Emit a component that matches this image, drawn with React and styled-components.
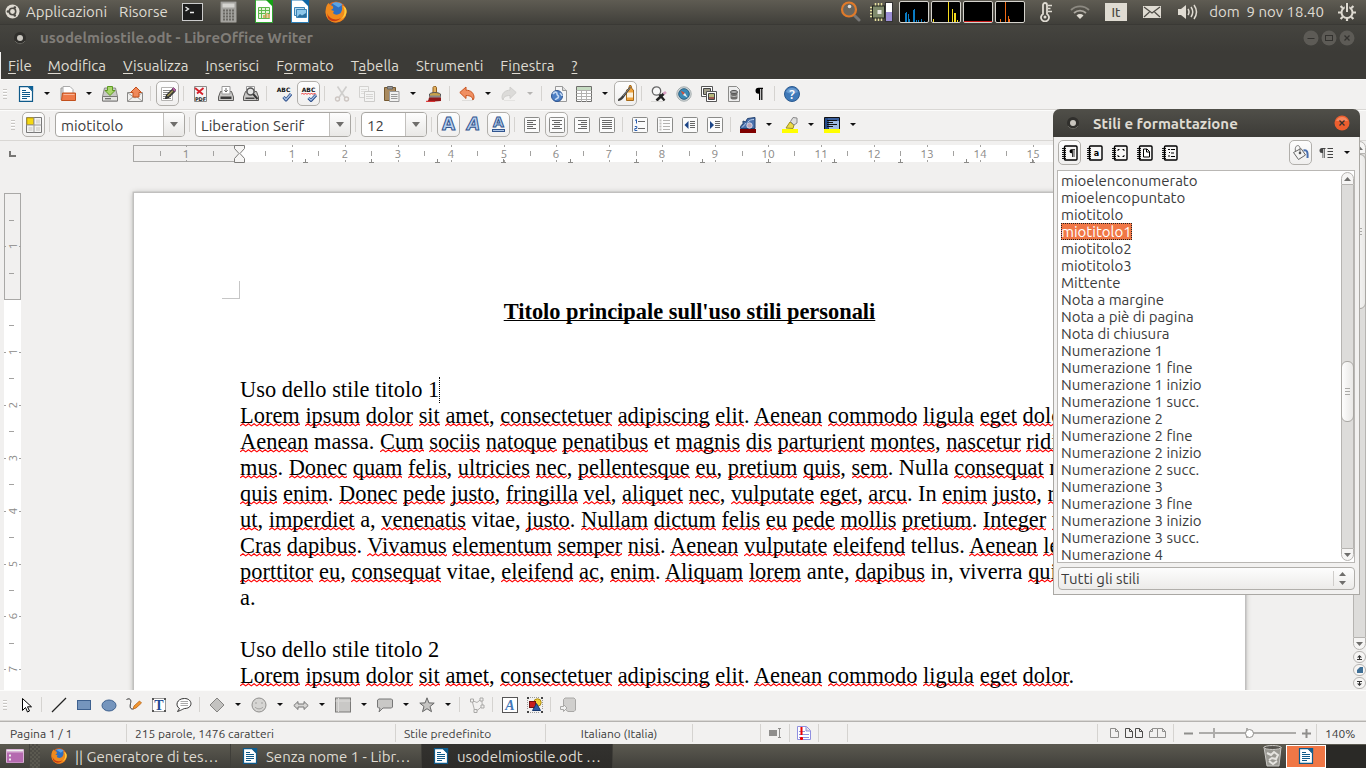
import React from "react";
import styled, { createGlobalStyle, css } from "styled-components";

const ui = `Ubuntu, "Noto Sans", "Open Sans", sans-serif`;
const serif = `"Liberation Serif", "Times New Roman", serif`;

const Global = createGlobalStyle`
  * { box-sizing: border-box; }
  html, body { margin: 0; height: 100%; overflow: hidden; }
  body { font-family: ${ui}; font-size: 15px; color: #3c3c3c; background: #f2f1f0; }
  button, input, select { font-family: inherit; font-size: inherit; color: inherit; }
  button { border: 0; background: none; padding: 0; }
`;

/* ---------- frame ---------- */

const Desktop = styled.div`
  display: flex;
  flex-direction: column;
  height: 100vh;
  position: relative;
  overflow: hidden;
`;

const Panel = styled.header`
  display: flex;
  align-items: center;
  flex: none;
  height: 25px;
  padding: 0 10px 1px 5px;
  color: #dfdbd2;
  background: linear-gradient(#5f5c53, #403f3a);
  border-bottom: 1px solid #3a3935;
`;

const PanelButton = styled.button`
  display: flex;
  align-items: center;
  height: 23px;
  color: #dfdbd2;
  margin-right: ${(p) => p.$after || 0}px;
`;

const Spacer = styled.div`
  flex: 1;
`;

const TitleBar = styled.div`
  display: flex;
  align-items: center;
  flex: none;
  height: 27px;
  padding: 0 11px 1px 12px;
  background: linear-gradient(#45443f, #3c3b37);
`;

const WindowTitle = styled.h1`
  flex: 1;
  margin: 0 0 0 12px;
  font-size: 15px;
  line-height: 20px;
  font-weight: 700;
  color: #807d78;
`;

const WindowButtons = styled.div`
  display: flex;
  gap: 2px;
`;

const MenuBar = styled.nav`
  display: flex;
  align-items: center;
  flex: none;
  height: 27px;
  gap: 1px;
  background: #3c3b37;
  border-left: 1px solid #f2f1f0;
`;

const MenuButton = styled.button`
  height: 26px;
  padding: 0 8px;
  color: #dfdbd2;
  u { text-underline-offset: 2px; }
  &:first-child { padding: 0 7px; }
`;

/* ---------- toolbars ---------- */

const Toolbar = styled.div`
  display: flex;
  align-items: center;
  flex: none;
  height: 31px;
  padding: 0 0 2px ${(p) => p.$indent || 3}px;
  background: #f2f1f0;
  border-top: 1px solid #fcfcfb;
  border-bottom: 1px solid #d9d7d4;
`;

const Grip = styled.span`
  flex: none;
  width: 4px;
  height: 10px;
  margin-right: ${(p) => p.$after || 6}px;
  background: repeating-linear-gradient(#c9c7c4 0 1px, #fff 1px 2px, transparent 2px 3px);
`;

const pressed = css`
  border: 1px solid #b1afab;
  border-radius: 5px;
  background: linear-gradient(#fdfdfd, #f0efee);
`;

const Tool = styled.button`
  display: flex;
  align-items: center;
  justify-content: center;
  flex: none;
  width: 23px;
  height: 25px;
  margin: 0 1px;
  ${(p) => p.$on && pressed}
  svg { flex: none; }
`;

const DropArrow = styled.button`
  display: flex;
  align-items: center;
  justify-content: center;
  flex: none;
  width: 17px;
  height: 25px;
  color: ${(p) => (p.$dim ? "#b5b4b2" : "#111")};
  &::after {
    content: "";
    border: 3px solid transparent;
    border-top-color: currentColor;
    border-bottom: 0;
  }
`;

const Separator = styled.span`
  flex: none;
  width: 1px;
  height: 15px;
  margin: 0 4px 0 3px;
  background: #d5d3d0;
`;

const Combo = styled.div`
  display: flex;
  flex: none;
  width: ${(p) => p.$width}px;
  height: 25px;
  margin: 0 1px;
  border: 1px solid #a9a7a3;
  border-radius: 4px;
  background: #fff;
  overflow: hidden;
`;

const ComboInput = styled.input`
  flex: 1;
  min-width: 0;
  border: 0;
  outline: 0;
  padding: 2px 5px 0;
  background: transparent;
`;

const ComboButton = styled.button`
  display: flex;
  align-items: center;
  justify-content: center;
  width: 21px;
  border-left: 1px solid #c2c0bd;
  background: linear-gradient(#fdfdfd, #e9e8e6);
  &::after {
    content: "";
    border: 4px solid transparent;
    border-top: 5px solid #6f6e6c;
    border-bottom: 0;
  }
`;

/* ---------- document area ---------- */

const Main = styled.main`
  display: flex;
  flex: 1;
  min-height: 0;
  background: #f1f0ef;
`;

const Editor = styled.div`
  display: flex;
  flex-direction: column;
  flex: 1;
  min-width: 0;
`;

const RulerRow = styled.div`
  display: flex;
  flex: none;
  height: 23px;
  padding-top: 3px;
`;

const RulerCorner = styled.div`
  flex: none;
  width: 25px;
  padding: 7px 0 0 9px;
  line-height: 0;
`;

const RulerTrack = styled.div`
  display: flex;
  justify-content: center;
  flex: 1;
  min-width: 0;
  svg { flex: none; }
`;

const Work = styled.div`
  display: flex;
  flex: 1;
  min-height: 0;
`;

const SideRuler = styled.div`
  flex: none;
  width: 25px;
  padding: 29px 0 0 4px;
  overflow: hidden;
`;

const Canvas = styled.div`
  display: flex;
  justify-content: center;
  flex: 1;
  min-width: 0;
  overflow: hidden;
  padding: 29px 0 0 1px;
`;

/* The sheet keeps its A4 size in document units; the view shows it at 140%. */
const Sheet = styled.article`
  zoom: 1.4;
  flex: none;
  width: 794px;
  height: 1123px;
  padding: 63px 76px 0;
  background: #fff;
  box-shadow: 0 0 0 1px #c1c0bf, 0 1px 4px 1px #a9a8a6;
  font-family: ${serif};
  font-size: 16px;
  color: #000;
`;

const CornerMark = styled.div`
  width: 13px;
  height: 13px;
  margin-left: -13px;
  border-right: 1px solid #c6c6c6;
  border-bottom: 1px solid #c6c6c6;
`;

const DocTitle = styled.h2`
  margin: 0;
  font-size: 16px;
  font-weight: 700;
  text-align: center;
  text-decoration: underline;
  text-decoration-thickness: 1px;
  text-underline-offset: 1px;
  text-decoration-skip-ink: none;
`;

const Para = styled.p`
  margin: 0;
`;

const wave = "M0 2.2" + "l2 -1.6l2 1.6".repeat(10);
const waveImage = encodeURIComponent(
  `<svg xmlns="http://www.w3.org/2000/svg" width="40" height="3" viewBox="0 0 40 3"><path d="${wave}" fill="none" stroke="#f00" stroke-width=".8"/></svg>`
);

const Misspelt = styled.span`
  background: url("data:image/svg+xml,${waveImage}") repeat-x 0 calc(100% - 1px) / 40px 3px;
`;

const Caret = styled.span`
  display: inline-block;
  height: 18px;
  vertical-align: top;
  border-left: 1px dotted #000;
`;

/* ---------- scrollbars ---------- */

const Scroll = styled.div`
  display: flex;
  flex-direction: column;
  align-items: stretch;
  flex: none;
  width: 13px;
  padding-bottom: ${(p) => p.$after || 0}px;
`;

const ScrollButton = styled.button`
  display: flex;
  align-items: center;
  justify-content: center;
  flex: none;
  height: ${(p) => (p.$round ? 12 : 13)}px;
  margin-top: ${(p) => (p.$round ? 1 : 0)}px;
  border: 1px solid #b6b4b1;
  border-radius: ${(p) => (p.$round ? "6px" : p.$down ? "0 0 7px 7px" : "7px 7px 0 0")};
  background: #f6f5f4;
`;

const ScrollTrough = styled.div`
  display: flex;
  flex-direction: column;
  flex: 1;
  min-height: 0;
  background: #dddcda;
  border: solid #b6b4b1;
  border-width: 0 1px;
`;

const ScrollGap = styled.div`
  flex: ${(p) => p.$grow};
`;

const ScrollThumb = styled.div`
  display: flex;
  align-items: center;
  justify-content: center;
  flex: ${(p) => p.$grow};
  margin: 0 -1px;
  border: 1px solid #a9a7a3;
  border-radius: 6px;
  background: linear-gradient(90deg, #fdfdfd, #e9e8e6);
  &::after {
    content: "";
    width: 5px;
    height: 7px;
    background: repeating-linear-gradient(#aaa9a6 0 1px, transparent 1px 3px);
  }
`;

/* ---------- styles window ---------- */

const StylesWindow = styled.aside`
  position: absolute;
  top: 109px;
  right: 6px;
  width: 307px;
  display: flex;
  flex-direction: column;
  border: 1px solid #aaa8a4;
  border-top: 0;
  border-radius: 7px 7px 0 0;
  background: #f2f1f0;
`;

const StylesTitle = styled.div`
  display: flex;
  align-items: center;
  height: 28px;
  margin: 0 -1px;
  padding: 0 10px 0 12px;
  border-radius: 7px 7px 0 0;
  background: linear-gradient(#504f49, #3c3b37);
  h2 {
    flex: 1;
    margin: 0 0 0 12px;
    font-size: 15px;
    color: #dfdbd2;
  }
`;

const CloseButton = styled.button`
  display: flex;
  width: 16px;
  height: 16px;
`;

const StylesTools = styled.div`
  display: flex;
  align-items: center;
  height: 33px;
  padding: 0 4px 2px 3px;
`;

const ListFrame = styled.div`
  display: flex;
  height: 393px;
  margin: 0 4px 0 3px;
  padding: 1px 0;
  border: 1px solid #b9b7b4;
  background: #fff;
`;

const StyleList = styled.ul`
  flex: 1;
  margin: 0;
  padding: 0 0 0 3px;
  list-style: none;
  overflow: hidden;
`;

const StyleItem = styled.li`
  height: 17px;
  line-height: 17px;
  white-space: nowrap;
  span {
    display: inline-block;
    height: 17px;
    ${(p) =>
      p.$selected &&
      css`
        color: #fff;
        background: #f07746;
        outline: 1px dotted #222;
        outline-offset: -1px;
      `}
  }
`;

const FilterField = styled.label`
  display: block;
  position: relative;
  margin: 4px 4px 4px;
`;

const FilterSelect = styled.select`
  display: block;
  width: 100%;
  height: 23px;
  padding: 0 2px;
  appearance: none;
  border: 1px solid #b1afab;
  border-radius: 4px;
  background: linear-gradient(#fdfdfd, #ecebe9);
`;

const FilterArrows = styled.span`
  position: absolute;
  right: 9px;
  top: 4px;
  padding-left: 5px;
  height: 15px;
  border-left: 1px solid #cfcdca;
  pointer-events: none;
`;

/* ---------- status bar and task bar ---------- */

const StatusBar = styled.footer`
  display: flex;
  flex: none;
  align-items: center;
  height: 23px;
  font-size: 12px;
  border-top: 1px solid #b5b3b0;
  background: #f2f1f0;
`;

const StatusCell = styled.div`
  display: flex;
  align-items: center;
  justify-content: ${(p) => (p.$center ? "center" : "flex-start")};
  flex: none;
  width: ${(p) => p.$width}px;
  height: 18px;
  padding-left: ${(p) => (p.$center ? 0 : p.$indent || 8)}px;
  gap: ${(p) => p.$gap || 4}px;
  border-right: 1px solid #d5d3d0;
  &:last-child { border: 0; }
`;

const StatusFill = styled.div`
  flex: 1;
  height: 18px;
  border-right: 1px solid #d5d3d0;
`;

const ZoomRange = styled.input`
  appearance: none;
  width: 97px;
  height: 12px;
  margin: 0;
  background:
    linear-gradient(#adacaa, #adacaa) 14px 1px / 2px 10px no-repeat,
    linear-gradient(#adacaa, #adacaa) 47px 1px / 2px 10px no-repeat,
    linear-gradient(#adacaa, #adacaa) 0 5px / 100% 2px no-repeat;
  &::-webkit-slider-thumb {
    appearance: none;
    width: 9px;
    height: 9px;
    border: 1px solid #8f8e8b;
    border-radius: 50%;
    background: #fff;
  }
`;

const TaskBar = styled.footer`
  display: flex;
  align-items: center;
  flex: none;
  height: 24px;
  padding-left: 6px;
  color: #dfdbd2;
  background: linear-gradient(#5b5950, #403f3a);
`;

const TaskGrip = styled.span`
  width: 11px;
  height: 24px;
  margin-left: 5px;
  border-left: 1px solid #45443f;
  background: repeating-conic-gradient(#4d4b45 0 25%, #5b5950 0 50%) 0 0 / 4px 4px;
`;

const Task = styled.button`
  display: flex;
  align-items: center;
  gap: 8px;
  width: 191px;
  height: 24px;
  padding-left: 11px;
  color: #dfdbd2;
  white-space: nowrap;
  border-right: 1px solid #3f3e39;
  background: ${(p) => (p.$active ? "linear-gradient(#33322f, #2d2c29)" : "transparent")};
  svg { flex: none; }
`;

const Workspace = styled.button`
  display: flex;
  align-items: center;
  justify-content: center;
  width: 40px;
  height: 23px;
  background: ${(p) => (p.$current ? "#f07746" : "#2a2926")};
  border: ${(p) => (p.$current ? "1px solid #fff" : "0")};
`;

/* ---------- drawings ---------- */

const Svg = ({ w = 16, h = w, box, children }) => (
  <svg width={w} height={h} viewBox={box || `0 0 ${w} ${h}`} aria-hidden="true">
    {children}
  </svg>
);

const lines = (x1, x2, ys, color = "#666") => (
  <path d={ys.map((y) => `M${x1} ${y}H${x2}`).join("")} stroke={color} fill="none" />
);

const Boxed = ({ children }) => (
  <Svg>
    <rect x="0.5" y="0.5" width="15" height="15" rx="1" fill="#fbfbfb" stroke="#8b8b89" />
    {children}
  </Svg>
);

const StyleBook = ({ children }) => (
  <Svg>
    <rect x="2.500" y="1" width="12.500" height="14" rx="1" fill="#f8f7f6" stroke="#000" strokeWidth="1.400" />
    <path d="M0 3.500h4M0 5.500h4M0 7.500h4M0 9.500h4M0 11.500h4M0 13.500h4" stroke="#000" strokeWidth=".900" />
    {children}
  </Svg>
);

const WriterDoc = ({ s = 16 }) => (
  <Svg w={s} box="0 0 16 16">
    <path d="M1.500 .700h8.500l4.500 4.500V15.300H1.500z" fill="#fff" stroke="#0f5a8a" strokeWidth="1.200" />
    <path d="M10 0h5.200v5.500z" fill="#0b5f95" />
    <path d="M4 4.500h4M4 6.500h8M4 8.500h8M4 10.500h8M4 12.500h5" stroke="#0f5a8a" />
  </Svg>
);

const Firefox = ({ s = 16 }) => (
  <Svg w={s} box="0 0 22 22">
    <circle cx="11" cy="11" r="10.500" fill="#e5641a" />
    <circle cx="11.500" cy="9" r="7.500" fill="#2f6fc0" />
    <path d="M7 2.500c3-2 8-1.500 10.500 1l-4 3z" fill="#5ba4e6" />
    <path d="M1 7C1.500 4 3 2.500 4 2c0 1.500 1 2 2.500 2.500C8 5 8.500 6 8 7.500L6 9l3 1-1 2c2 2.500 6 2 8-.5 1.500-2.500 1.500-5 .5-7.500C21 6 22 10 21 14c-2 6-9 9-14.500 6.500C1 18 0 12 1 7z" fill="#f08a1d" />
    <path d="M18 5c2.500 4 2 10-2 13 3.500-1 6-5 5.500-9C21 7 19.500 5.500 18 5z" fill="#fccf3d" />
    <path d="M2 12c2 6 9 8 14 5-3 4-10 4.500-13 0z" fill="#c83d12" />
  </Svg>
);

const Dot = () => (
  <Svg w={16}>
    <circle cx="8" cy="8" r="6" fill="#302f2c" />
    <path d="M3 11a6 6 0 0 0 10 0" stroke="#66655f" fill="none" />
    <circle cx="8" cy="8" r="3" fill="#c9c6bf" />
  </Svg>
);

const Graph = ({ bars, color, floor }) => (
  <Svg w={30} h={22}>
    <rect x="0.500" y="0.500" width="29" height="21" rx="1.500" fill="#000" stroke="#d5d3cd" />
    {bars.map(([x, hh]) => (
      <rect key={x} x={x} y={21 - hh} width="1" height={hh} fill={color} />
    ))}
    {floor && <path d="M1 20.500h28" stroke={color} />}
  </Svg>
);

const Letter = ({ italic, underline }) => (
  <Svg w={19} h={21}>
    <text x={9.5} y={underline ? 13 : 16} textAnchor="middle" fontFamily="DejaVu Sans" fontWeight="700" fontStyle={italic ? "italic" : "normal"}
      fontSize={underline ? 14 : 17} fill="#b7d0ee" stroke="#31558f" strokeWidth="1">A</text>
    {underline && <rect x="3.500" y="15.500" width="12" height="2" fill="#a9c3e4" stroke="#31558f" />}
  </Svg>
);

const grey = "#8f8e8c";

const icons = {
  newDoc: <WriterDoc />,
  open: (
    <Svg>
      <path d="M1 14V2h5l1 2h5v4" fill="#ddd" stroke="#9b9a98" />
      <path d="M3 0.500h7l3 3V8H3z" fill="#fff" stroke="#aaa" />
      <path d="M1.500 14.500l1-7.500h13v7.500z" fill="#ee7a49" stroke="#c2501d" />
      <path d="M3.500 8.500h11" stroke="#f9b698" />
    </Svg>
  ),
  save: (
    <Svg>
      <path d="M2.500 2h11l2 8.500v4.500H.5v-4.500z" fill="#c9c8c6" stroke="#8b8a88" />
      <path d="M.5 10.500h15v4.500H.5z" fill="#e4e3e1" stroke="#7b7a78" />
      <path d="M3 12.700h6" stroke="#666" strokeWidth="1.200" />
      <path d="M5.500 0.500h5V4.500H13L8 9.500 3 4.500h2.500z" fill="#a9d66a" stroke="#5c9a22" />
    </Svg>
  ),
  mail: (
    <Svg>
      <path d="M.5 6.500h15v9H.5z" fill="#f1f0ee" stroke="#8b8a88" />
      <path d="M1 15L6.500 10.500M15 15L9.500 10.500M1 7l7 5 7-5" stroke="#a5a4a2" fill="none" />
      <path d="M6 11V6.500H3.500L9 1l5.500 5.500H12V11z" fill="#f0895a" stroke="#c2501d" />
    </Svg>
  ),
  edit: (
    <Svg>
      <path d="M1.500 1.500h11v13h-11z" fill="#fff" stroke="#b5b4b2" />
      {lines(3, 11, [4.5, 6.5, 8.5, 10.5, 12.5], "#8a8a88")}
      <path d="M5.500 12.500l1-3.500 6-6 2.500 2.500-6 6z" fill="#4a4a44" stroke="#222" />
      <path d="M7.500 10L13 4.500" stroke="#e5cf55" />
      <path d="M12 3l1.500-1.500L16 4l-1.500 1.500z" fill="#b05a9e" stroke="#5c2a52" strokeWidth=".600" />
    </Svg>
  ),
  pdf: (
    <Svg>
      <path d="M1.500 .500h12v15h-12z" fill="#f6f6f6" stroke="#8b8b89" />
      <path d="M2 2l8 6.500M10.500 2L4 7.500" stroke="#d5202a" strokeWidth="1.800" />
      <text x="7.500" y="14.500" textAnchor="middle" fontFamily="DejaVu Sans" fontWeight="700" fontSize="5" fill="#222">PDF</text>
    </Svg>
  ),
  print: (
    <Svg>
      <path d="M2.500 5.500h11l2 5.500v3.500H.5V11z" fill="#c9c8c6" stroke="#5c5b59" />
      <path d="M4 .500h8V8H4z" fill="#fff" stroke="#999" />
      <path d="M8 2v4M6.300 4.300L8 6l1.700-1.700" stroke="#666" fill="none" />
      <path d="M2.500 10.500h11v2.500h-11z" fill="#3a3a3a" />
    </Svg>
  ),
  preview: (
    <Svg>
      <path d="M2.500 5.500h11l2 5.500v3.500H.5V11z" fill="#c9c8c6" stroke="#5c5b59" />
      <path d="M2.500 11.500h9v1.500h-9z" fill="#444" />
      <path d="M3.500.500h8V7h-8z" fill="#fff" stroke="#999" />
      <circle cx="7.500" cy="5.500" r="3.500" fill="#e4e4e3" stroke="#555" strokeWidth="1.400" />
      <path d="M10.200 8.200L14.500 13" stroke="#333" strokeWidth="2" />
    </Svg>
  ),
  spell: (
    <Svg>
      <text x="7.500" y="6" textAnchor="middle" fontFamily="DejaVu Sans" fontWeight="700" fontSize="6" fill="#111">ABC</text>
      <path d="M7.500 11l2.500 3 5-6" stroke="#274a86" strokeWidth="3" fill="none" strokeLinejoin="round" />
      <path d="M7.700 11.200L10 13.700l4.700-5.500" stroke="#a9c3e8" strokeWidth="1.400" fill="none" />
    </Svg>
  ),
  autoSpell: (
    <Svg>
      <text x="7.500" y="6" textAnchor="middle" fontFamily="DejaVu Sans" fontWeight="700" fontSize="6" fill="#111">ABC</text>
      <path d="M0 8.500l1.500-1.500 1.500 1.500L4.500 7 6 8.500 7.500 7 9 8.500 10.500 7 12 8.500 13.500 7 15 8.500" stroke="#e22" fill="none" strokeWidth=".900" />
      <path d="M7.500 12l2.500 2.500 5-5.500" stroke="#274a86" strokeWidth="3" fill="none" strokeLinejoin="round" />
      <path d="M7.700 12L10 14.200l4.700-5" stroke="#a9c3e8" strokeWidth="1.300" fill="none" />
    </Svg>
  ),
  cut: (
    <Svg>
      <path d="M3.500.500l7.500 11M12.500.500L5 11.500" stroke="#cfcecc" strokeWidth="1.600" />
      <circle cx="3.500" cy="13" r="2" fill="none" stroke="#cdc6c2" strokeWidth="1.400" />
      <circle cx="12.500" cy="13" r="2" fill="none" stroke="#cdc6c2" strokeWidth="1.400" />
    </Svg>
  ),
  copy: (
    <Svg>
      <path d="M.5 .500h9v11h-9z" fill="#f4f4f3" stroke="#d3d2d0" />
      {lines(2, 8, [3.5, 5.5, 7.5], "#dfdedc")}
      <path d="M5.500 5.500h10v10h-10z" fill="#f4f4f3" stroke="#cdccca" />
      {lines(7, 14, [8.5, 10.5, 12.5], "#d6d5d3")}
    </Svg>
  ),
  paste: (
    <Svg>
      <path d="M.5 1.500h11v13H.5z" fill="#a98a5f" stroke="#75582f" />
      <path d="M3.500.500h5v2.500h-5z" fill="#999" stroke="#666" />
      <path d="M5.500 5.500h9.500v10H5.500z" fill="#f1f1f0" stroke="#999" />
      {lines(7, 13.5, [8.5, 10.5, 12.5], "#999")}
    </Svg>
  ),
  brush: (
    <Svg>
      <path d="M7 1.500c0-1.500 3.500-1.500 3.500 0v5.500H7z" fill="#e2b060" stroke="#8f5d1a" />
      <path d="M3.500 8c2-2 8.500-2 11 0v3h-11z" fill="#c9a24a" stroke="#555" />
      <path d="M3.500 9.500h11l.5 2h-12z" fill="#888" />
      <path d="M3 11.500h12v3.500c-4 .500-9 .500-14 .5 1.500-1 1.500-2 2-4z" fill="#8f1a1a" />
      <path d="M0 15.300h9" stroke="#d22" />
    </Svg>
  ),
  undo: (
    <Svg>
      <path d="M.800 6.500L7 1v3.200c5 0 8 3 8 7.300 0 1-.5 2-1.200 2.500 0-3-2.300-4.500-6.800-4.500v3z" fill="#f08f62" stroke="#c9541f" />
      <path d="M3 14.500h11" stroke="#dedddb" />
    </Svg>
  ),
  redo: (
    <Svg>
      <path d="M15.200 6.500L9 1v3.200c-5 0-8 3-8 7.300 0 1 .5 2 1.200 2.500 0-3 2.300-4.500 6.800-4.500v3z" fill="#dcdbd9" stroke="#cfcecc" />
      <path d="M3 14.500h11" stroke="#e4e3e1" />
    </Svg>
  ),
  link: (
    <Svg>
      <path d="M4.500.500h7l4 4v11h-11z" fill="#f6f6f6" stroke="#999" />
      <path d="M11.500.500v4h4" fill="#ddd" stroke="#999" />
      <circle cx="6" cy="10" r="5.500" fill="#4d7fc4" stroke="#2f5590" />
      <path d="M2 8c2-3 4-2 4 0s2 1 1.500 3-3 1-3 3M9 7c1 1 2 2 2 3" stroke="#c3d8f2" fill="none" strokeWidth="1.600" />
    </Svg>
  ),
  table: (
    <Svg>
      <path d="M.5.500h15v15H.5z" fill="#fff" stroke="#6f6e6c" />
      <path d="M1 1h14v3H1z" fill="#c6dcc2" />
      <path d="M.5 4.500h15M.5 7.500h15M.5 10.500h15M.5 13.500h15M5.500 4v12M10.500 4v12" stroke="#b3b2b0" />
    </Svg>
  ),
  draw: (
    <Svg w={17} h={17}>
      <path d="M9.500 5l2-1 1-3.500h1.500L15 4l1.500 1v10.500h-7z" fill="#f0a23b" stroke="#a56a1a" />
      <path d="M10 7.500h6v5h-6z" fill="#fbf1dc" />
      <path d="M1 16c0-3 2-2.500 3-4L13 1.500l1 1L6.500 13C5 15 3 16 1 16z" fill="#3d3d3c" />
      <path d="M6 11L13.500 2" stroke="#9a9a98" strokeWidth=".800" />
    </Svg>
  ),
  find: (
    <Svg>
      <circle cx="5.500" cy="5" r="4.200" fill="#f8f8f8" stroke="#666" strokeWidth="1.300" />
      <path d="M8.500 8.500l5 6" stroke="#222" strokeWidth="2.200" />
      <path d="M5.500 14.500L13 7.500" stroke="#222" strokeWidth="2.600" />
      <path d="M12.500 8l2.500-2" stroke="#d9a0c2" strokeWidth="2.800" />
      <path d="M0 15.500h12" stroke="#d9d8d6" />
    </Svg>
  ),
  compass: (
    <Svg>
      <circle cx="8" cy="8" r="7.200" fill="#d5dadb" stroke="#a3abad" />
      <circle cx="8" cy="8" r="5.300" fill="#3a8ab6" stroke="#2b5f7f" />
      <path d="M4.500 4.500L9 7 7 9z" fill="#d2503a" />
      <path d="M11.500 11.500L7 9l2-2z" fill="#e8edf0" />
    </Svg>
  ),
  gallery: (
    <Svg>
      <path d="M.5.500h11v10H.5z" fill="#fff" stroke="#555" />
      <path d="M2.500 2.500h7v6h-7z" fill="#a3a08a" stroke="#444" />
      <path d="M5.500 5.500h10v10h-10z" fill="#fff" stroke="#555" />
      <path d="M7.500 7.500h6v6h-6z" fill="#b5b87a" stroke="#444" />
      <path d="M8 11h5v2H8z" fill="#a05a50" />
    </Svg>
  ),
  database: (
    <Svg>
      <path d="M2.500.500h8l3 3v12h-11z" fill="#eee" stroke="#8b8b89" />
      <path d="M4.500 6v6c0 2 7 2 7 0V6z" fill="#6f6e6c" />
      <ellipse cx="8" cy="6" rx="3.500" ry="1.600" fill="#aaa" stroke="#555" />
      <path d="M4.500 9c0 2 7 2 7 0" stroke="#bbb" fill="none" />
    </Svg>
  ),
  pilcrow: (
    <Svg>
      <path d="M12 1.700H7.500a3 3 0 0 0 0 6H8V14h1.200V2.900h1V14h1.200V2.900H12z" fill="#000" />
    </Svg>
  ),
  help: (
    <Svg>
      <circle cx="8" cy="8" r="7.500" fill="#3f79b8" stroke="#2b5a90" />
      <path d="M2 6a6.500 6.500 0 0 1 12 0c-4 2-8 2-12 0z" fill="#6a9bd0" />
      <text x="8" y="12.500" textAnchor="middle" fontFamily="Noto Sans" fontWeight="600" fontSize="12" fill="#fff">?</text>
    </Svg>
  ),
  styles: (
    <Svg>
      <path d="M.5.500h15v15H.5z" fill="#f3f3f2" stroke="#777" />
      <path d="M1 1h6.500v6.500H1z" fill="#f3d913" stroke="#c9a50a" />
      <path d="M8 .500v15M.5 8h15" stroke="#999" />
      <path d="M10 2.500h4v4h-4zM2.500 10h4v4h-4zM10 10h4v4h-4z" fill="#dcdbd9" />
    </Svg>
  ),
  left: <Boxed>{lines(3, 12, [3.5, 7.5, 11.5])}{lines(3, 9, [5.5, 9.5])}</Boxed>,
  center: <Boxed>{lines(3, 13, [3.5, 7.5, 11.5])}{lines(5, 11, [5.5, 9.5])}</Boxed>,
  right: <Boxed>{lines(4, 13, [3.5, 7.5, 11.5])}{lines(7, 13, [5.5, 9.5])}</Boxed>,
  justify: <Boxed>{lines(3, 13, [3.5, 5.5, 7.5, 9.5, 11.5])}</Boxed>,
  numbered: (
    <Boxed>
      {lines(6, 13, [4.5, 11.5])}
      <path d="M3 3.500l1.500-1V6.500M2.800 9.500h2v2h-2v2h2.500" stroke="#2c5fae" fill="none" />
    </Boxed>
  ),
  bullets: (
    <Boxed>
      {lines(6, 13, [3.5, 6.5, 9.5, 12.5], "#b3b2b0")}
      <path d="M2.500 2.500h2v2h-2zM2.500 5.500h2v2h-2zM2.500 8.500h2v2h-2zM2.500 11.500h2v2h-2z" fill="#c3c2c0" />
    </Boxed>
  ),
  outdent: (
    <Boxed>
      <path d="M6.500 4v8L2.500 8z" fill="#1c4587" />
      {lines(8, 13, [4.5, 6.5, 8.5, 10.5])}
    </Boxed>
  ),
  indent: (
    <Boxed>
      <path d="M3 4v8l4-4z" fill="#1c4587" />
      {lines(8, 13, [4.5, 6.5, 8.5, 10.5])}
    </Boxed>
  ),
  fontColor: (
    <Svg>
      <path d="M.5 11.500c0-3 1-4 2.500-4l0-3.500 2.500 1L7.500 1.500l7.500-1v11z" fill="#4a70ac" stroke="#24426f" />
      <path d="M2 10.500c1-2 3-2 4-4.500M7.500 5.500c2-2.500 4-3 6.500-3" stroke="#b7cce8" fill="none" />
      <circle cx="9.500" cy="8.500" r="2.700" fill="#b9a3b8" stroke="#dbe6f5" strokeWidth=".800" />
      <path d="M0 12h16v4H0z" fill="#800000" />
    </Svg>
  ),
  highlight: (
    <Svg>
      <path d="M4 11l4-6 4 3-1 3.500z" fill="#ead94a" stroke="#9f8f1a" />
      <path d="M8.500 4.500L11 .500l4 .5v5L12 8z" fill="#ddd" stroke="#888" />
      <path d="M0 12h16v4H0z" fill="#ff0" />
    </Svg>
  ),
  background: (
    <Svg>
      <path d="M.5.500h15V12H.5z" fill="#3a5f9c" stroke="#111" />
      <path d="M5 4h10v8H5z" fill="#9dbbe2" />
      <path d="M1 1h3v11H1z" fill="#254a88" />
      {lines(3, 13, [3.5, 7.5], "#111")}
      {lines(3, 9, [5.5, 9.5], "#111")}
      <path d="M0 12h16v4H0z" fill="#ff0" />
    </Svg>
  ),
  select: (
    <Svg>
      <path d="M4.500 1.500v12l3-3 2 4.500 2-1-2-4.200h4z" fill="#fff" stroke="#000" />
    </Svg>
  ),
  line: <Svg><path d="M1 15L15 1" stroke="#222" strokeWidth="1.200" /></Svg>,
  rect: <Svg><rect x="1.500" y="3.500" width="13" height="9" fill="#7595bd" stroke="#3e618f" /></Svg>,
  ellipse: <Svg><ellipse cx="8" cy="8.500" rx="7" ry="5.500" fill="#7595bd" stroke="#3e618f" /></Svg>,
  curve: (
    <Svg>
      <path d="M.5 2.500c4-2 5 1 4 4-1 4 0 6 3 5.500" stroke="#333" fill="none" />
      <path d="M7 12l1-3 5.500-5 2 2-5.500 5z" fill="#f2962f" stroke="#b5641a" strokeWidth=".800" />
    </Svg>
  ),
  text: (
    <Svg>
      <rect x="1.500" y="1.500" width="13" height="13" fill="#fff" stroke="#999" />
      <path d="M1 1h2v2H1zM13 1h2v2h-2zM1 13h2v2H1zM13 13h2v2h-2z" fill="#555" />
      <text x="8" y="13" textAnchor="middle" fontFamily="Liberation Serif" fontWeight="700" fontSize="14" fill="#1f4a94">T</text>
    </Svg>
  ),
  callout: (
    <Svg>
      <path d="M1.500 14.500l2-3C-1 9 .500 1.500 8.500 1.500s9 9.500.5 10c-1.500 0-3 1.500-7.500 3z" fill="#fff" stroke="#333" />
      {lines(4.5, 12, [4.5, 6.5, 8.5], "#aaa")}
    </Svg>
  ),
  diamond: <Svg><path d="M8 1l7 7-7 7-7-7z" fill="#c3c2c0" stroke="#858482" /></Svg>,
  smiley: (
    <Svg>
      <circle cx="8" cy="8" r="7" fill="#d6d5d3" stroke="#8f8e8c" />
      <path d="M5 5v2M11 5v2M4 10c2 2.500 6 2.500 8 0" stroke="#a3a2a0" fill="none" />
    </Svg>
  ),
  arrows: <Svg><path d="M.800 8.500l4.200-4v2.500h6V4.500l4.200 4-4.200 4V10H5v2.500z" fill="#d6d5d3" stroke="#777" /></Svg>,
  flow: (
    <Svg>
      <rect x=".5" y="1" width="15" height="14" fill="#c9c8c6" stroke="#7b7a78" />
      <path d="M3.500 1v14M.5 4h15" stroke="#dddcda" />
    </Svg>
  ),
  shout: <Svg><path d="M2 2h12.500l1 1v7l-1 1H6l-4 4 1-4H1.500l-1-1V3z" fill="#c9c8c6" stroke="#777" /></Svg>,
  star: <Svg><path d="M8 .800l1.900 5.100 5.300.200-4.200 3.400 1.500 5.200L8 11.700l-4.500 3 1.500-5.200L.800 6.100l5.300-.200z" fill="#c6c5c3" stroke="#666" /></Svg>,
  points: (
    <Svg>
      <path d="M3 3.500l5 2 4.500-3.500 1 7-6 5L5.500 13z" fill="none" stroke="#b1b0ae" />
      <path d="M1.500 2h3v3h-3zM11 1h3v3h-3zM12 8h3v3h-3zM5 12.500h3v3H5z" fill="#f2f1f0" stroke="#a9a8a6" />
    </Svg>
  ),
  fontwork: (
    <Svg>
      <rect x=".5" y=".5" width="15" height="15" fill="#fff" stroke="#555" />
      <text x="8" y="13" textAnchor="middle" fontFamily="Liberation Serif" fontStyle="italic" fontWeight="700" fontSize="14" fill="#4478b8">A</text>
    </Svg>
  ),
  picture: (
    <Svg>
      <circle cx="10.500" cy="5.500" r="3.700" fill="#f3d13a" stroke="#a98a10" />
      <rect x="2.500" y="4.500" width="6" height="6" fill="#c81e1e" stroke="#701010" />
      <path d="M5.500 13.500l4-7 4 7z" fill="#2f5ca5" stroke="#17386f" />
      <path d="M0 0h2v2H0zM14 0h2v2h-2zM0 14h2v2H0zM14 14h2v2h-2z" fill="#444" />
      <path d="M3 .5h10M3 15.500h10M.5 3v10M15.500 3v10" stroke="#999" strokeDasharray="1 1" />
    </Svg>
  ),
  extrude: (
    <Svg>
      <path d="M3.500 6V2.500L5 1h9l1.500 1.500V13L14 14.500H8L3.500 11z" fill="#d0cfcd" stroke="#a9a8a6" />
      <path d="M.5 9.500h3V7.500L7 11l-3.500 3.500v-2h-3z" fill="#f1f1f0" stroke="#a9a8a6" />
    </Svg>
  ),
};

const styleIcons = [
  ["Stili di paragrafo", <StyleBook><path d="M13 4.200H9.500a2 2 0 0 0 0 4H10V12h.800V5h.800v7h.800V5h.600z" fill="#000" /></StyleBook>],
  ["Stili di carattere", <StyleBook><text x="9.500" y="11" textAnchor="middle" fontFamily="DejaVu Sans" fontWeight="700" fontSize="8" fill="#000">a</text></StyleBook>],
  ["Stili di cornice", <StyleBook><path d="M6 6V4.500h1.500M10.500 4.500H12V6M12 10v1.500h-1.500M7.500 11.500H6V10" stroke="#000" fill="none" /></StyleBook>],
  ["Stili di pagina", <StyleBook><path d="M6.500 4h3.500L12.500 6.500V12h-6zM9.500 4v3h3" fill="#fff" stroke="#000" /></StyleBook>],
  ["Stili di elenco", <StyleBook><path d="M6 4.500h2M9 4.500h4M7 7.500h1M9 8h3M6 11h2M9 11.500h4" stroke="#000" /></StyleBook>],
];

const Tri = ({ up }) => (
  <Svg w={7} h={4}>
    <path d={up ? "M3.500 0L7 4H0z" : "M0 0h7L3.500 4z"} fill="#6f6e6c" />
  </Svg>
);

const Expand = ({ up }) => (
  <Svg w={5} h={5}>
    <path d={up ? "M0 2.500L2.500 0 5 2.500H3V4h2v1H0V4h2V2.500z" : "M0 2.500L2.500 5 5 2.500H3V1h2V0H0v1h2v1.500z"} fill="#333" />
  </Svg>
);

/* ---------- rulers ---------- */

const CM = 52.9;
const MARGIN = 106;

const HorizontalRuler = () => {
  const marks = [];
  for (let n = -1; n <= 17; n += 1) {
    const x = MARGIN + Math.round(n * CM);
    if (n !== 0) {
      marks.push(
        <g key={`n${n}`}>
          <path d={`M${x + 0.5} 1v2M${x + 0.5} 16v2`} stroke="#a3a2a0" />
          <text x={x} y="14" textAnchor="middle">{Math.abs(n)}</text>
        </g>
      );
    }
  }
  const halves = [];
  for (let n = -1.5; n < 17; n += 1) {
    halves.push(`M${MARGIN + Math.round(n * CM) + 0.5} 7v5`);
  }
  const stops = [];
  for (let n = 1; n <= 13; n += 1) {
    const x = MARGIN + Math.round(n * 66.1);
    stops.push(`M${x + 0.5} 15v3M${x - 2} 18.500h5`);
  }
  return (
    <svg width="1112" height="20" fontFamily={ui} fontSize="12" fill="#8b8a88" aria-label="Righello orizzontale">
      <rect x={MARGIN} y="1" width="900" height="17" fill="#fff" />
      <rect x=".5" y="1.500" width={MARGIN} height="16" fill="#f1f0ef" stroke="#a9a8a6" />
      <rect x="1006" y="1.500" width="105" height="16" fill="#f1f0ef" stroke="#a9a8a6" />
      {marks}
      <path d={halves.join("")} stroke="#a3a2a0" />
      <path d={stops.join("")} stroke="#8b8a88" />
      <path d="M101.500 1.500h10v3l-4.500 5 4.500 5v4h-10v-4l4.500-5-4.500-5z" fill="#f6f5f4" stroke="#7d7c7a" />
    </svg>
  );
};

const VerticalRuler = () => {
  const marks = [];
  for (let n = -1; n <= 20; n += 1) {
    const y = MARGIN + Math.round(n * CM);
    if (n !== 0) {
      marks.push(
        <g key={n}>
          <path d={`M0 ${y + 0.5}h2M15 ${y + 0.5}h2`} stroke="#a3a2a0" />
          <text x="13" y={y} textAnchor="middle" transform={`rotate(-90 13 ${y})`}>{Math.abs(n)}</text>
        </g>
      );
    }
  }
  const halves = [];
  for (let n = -1.5; n < 20; n += 1) {
    halves.push(`M5 ${MARGIN + Math.round(n * CM) + 0.5}h5`);
  }
  return (
    <svg width="17" height="1123" fontFamily={ui} fontSize="12" fill="#8b8a88" aria-label="Righello verticale">
      <rect y={MARGIN} width="17" height="1000" fill="#fff" />
      <rect x=".5" y=".5" width="16" height={MARGIN} fill="#f1f0ef" stroke="#a9a8a6" />
      {marks}
      <path d={halves.join("")} stroke="#a3a2a0" />
    </svg>
  );
};

/* ---------- content ---------- */

const known = new Set(["massa", "et", "Nulla", "In", "a", "vitae", "tellus", "ante", "in", "viverra"]);

const body1 =
  "Lorem ipsum dolor sit amet, consectetuer adipiscing elit. Aenean commodo ligula eget dolor. Aenean massa. Cum sociis natoque penatibus et magnis dis parturient montes, nascetur ridiculus mus. Donec quam felis, ultricies nec, pellentesque eu, pretium quis, sem. Nulla consequat massa quis enim. Donec pede justo, fringilla vel, aliquet nec, vulputate eget, arcu. In enim justo, rhoncus ut, imperdiet a, venenatis vitae, justo. Nullam dictum felis eu pede mollis pretium. Integer tincidunt. Cras dapibus. Vivamus elementum semper nisi. Aenean vulputate eleifend tellus. Aenean leo ligula, porttitor eu, consequat vitae, eleifend ac, enim. Aliquam lorem ante, dapibus in, viverra quis, feugiat a.";
const body2 = "Lorem ipsum dolor sit amet, consectetuer adipiscing elit. Aenean commodo ligula eget dolor.";

const Checked = ({ text }) =>
  text.split(" ").map((token, i) => {
    const word = token.replace(/[.,]$/, "");
    return (
      <React.Fragment key={i}>
        {i > 0 && " "}
        {known.has(word) ? token : <><Misspelt>{word}</Misspelt>{token.slice(word.length)}</>}
      </React.Fragment>
    );
  });

const menus = [
  ["", "F", "ile"], ["", "M", "odifica"], ["", "V", "isualizza"], ["", "I", "nserisci"], ["F", "o", "rmato"],
  ["T", "a", "bella"], ["Strumenti", "", ""], ["Fi", "n", "estra"], ["", "?", ""],
];

const styleNames = [
  "mioelenconumerato", "mioelencopuntato", "miotitolo", "miotitolo1", "miotitolo2", "miotitolo3", "Mittente",
  "Nota a margine", "Nota a piè di pagina", "Nota di chiusura", "Numerazione 1", "Numerazione 1 fine",
  "Numerazione 1 inizio", "Numerazione 1 succ.", "Numerazione 2", "Numerazione 2 fine", "Numerazione 2 inizio",
  "Numerazione 2 succ.", "Numerazione 3", "Numerazione 3 fine", "Numerazione 3 inizio", "Numerazione 3 succ.",
  "Numerazione 4",
];

/* "|" separator, "v" drop arrow, "-v" disabled drop arrow, "*" prefix for a pressed tool */
const standardTools = "newDoc v open v save mail | *edit | pdf print preview | spell *autoSpell | cut copy paste v brush | undo v redo -v | link table v *draw | find compass gallery database pilcrow | help";
const alignTools = "left *center right justify | numbered bullets outdent indent | fontColor v highlight v background v";
const drawTools = "select | line rect ellipse curve text callout | diamond v smiley v arrows v flow v shout v star v | points | fontwork picture | extrude";

const Tools = ({ spec }) =>
  spec.split(" ").map((t, i) => {
    if (t === "|") return <Separator key={i} />;
    if (t === "v" || t === "-v") return <DropArrow key={i} $dim={t === "-v"} aria-label="Altro" />;
    const on = t[0] === "*";
    const name = on ? t.slice(1) : t;
    return <Tool key={i} $on={on} aria-label={name}>{icons[name]}</Tool>;
  });

const ComboBox = ({ label, value, width }) => (
  <Combo $width={width}>
    <ComboInput aria-label={label} defaultValue={value} />
    <ComboButton aria-label={`Apri ${label}`} />
  </Combo>
);

const RoundButton = ({ children, label, close }) => (
  <CloseButton aria-label={label}>
    <Svg>
      <circle cx="8" cy="8" r="7.500" fill={close ? "#ec5e2e" : "#5d5b56"} />
      {close && <path d="M2 6a6.500 6.500 0 0 1 12 0z" fill="#f4855d" />}
      {children}
    </Svg>
  </CloseButton>
);

const cross = <path d="M5.500 5.500l5 5M10.500 5.500l-5 5" stroke="#33322f" strokeWidth="1.300" />;

const Gap = styled.span`
  flex: none;
  width: ${(p) => p.$w}px;
`;

export default function App() {
  return (
    <Desktop>
      <Global />
      <Panel>
        <PanelButton $after={12}>
          <Svg w={15}>
            <circle cx="7.500" cy="7.500" r="7" fill="#dfdbd2" />
            <circle cx="7.500" cy="7.500" r="3.200" fill="none" stroke="#4c4a44" strokeWidth="1.600" />
            <circle cx="3" cy="7.500" r="1.300" fill="#4c4a44" />
            <circle cx="9.800" cy="3.500" r="1.300" fill="#4c4a44" />
            <circle cx="9.800" cy="11.500" r="1.300" fill="#4c4a44" />
          </Svg>
          <Gap $w={6} />
          Applicazioni
        </PanelButton>
        <PanelButton $after={14}>Risorse</PanelButton>
        <PanelButton $after={17} aria-label="Terminale">
          <Svg w={21} h={18}>
            <rect x=".5" y=".5" width="20" height="17" fill="#1d1d1d" stroke="#ccc" />
            <path d="M3.500 4l3 2-3 2M8 9.500h4" stroke="#eee" fill="none" strokeWidth="1.300" />
          </Svg>
        </PanelButton>
        <PanelButton $after={18} aria-label="Calcolatrice">
          <Svg w={17} h={22}>
            <rect x=".5" y=".5" width="16" height="21" rx="1" fill="#a3a29e" stroke="#77756f" />
            <rect x="2.500" y="2.500" width="12" height="4" fill="#d5d4d0" />
            <path d="M3 9.500h11M3 12.500h11M3 15.500h11M3 18.500h11" stroke="#6a6863" strokeWidth="2" strokeDasharray="2 1" />
          </Svg>
        </PanelButton>
        <PanelButton $after={18} aria-label="Calc">
          <Svg w={18} h={23}>
            <path d="M.5 0h12l5 5.500v17H.5z" fill="#fff" stroke="#2fa52f" />
            <path d="M11 0h7v7z" fill="#16a016" />
            <path d="M3.500 7.500h11v11h-11z" fill="#e4f3d6" stroke="#5fb84c" />
            <path d="M3.500 10.500h11M3.500 13.500h11M6.500 7.500v11M10.500 7.500v11" stroke="#5fb84c" />
            <path d="M9 18v-3M11.500 18v-5M14 18v-4" stroke="#d8b06b" strokeWidth="2" />
          </Svg>
        </PanelButton>
        <PanelButton $after={16} aria-label="Impress">
          <Svg w={18} h={23}>
            <path d="M.5 0h12l5 5.500v17H.5z" fill="#fff" stroke="#2a7db5" />
            <path d="M11 0h7v7z" fill="#0f66a5" />
            <path d="M3.500 7.500h10v8h-10z" fill="#b9dbf0" stroke="#3b83b5" />
            <path d="M5.500 9.500h10v8h-10z" fill="#8cc6ea" stroke="#3b83b5" />
            <path d="M6 17l3-3 2 1.500 4-2.500v4z" fill="#2a6f9f" />
          </Svg>
        </PanelButton>
        <PanelButton aria-label="Firefox"><Firefox s={22} /></PanelButton>
        <Spacer />
        <PanelButton $after={9} aria-label="Cerca">
          <Svg w={21} h={21}>
            <path d="M14 14l5 5" stroke="#777" strokeWidth="3" strokeLinecap="round" />
            <circle cx="9" cy="8.500" r="7" fill="#6a665e" stroke="#df7a2a" strokeWidth="2.200" />
            <circle cx="9.500" cy="5.500" r="1.800" fill="#ddd" />
          </Svg>
        </PanelButton>
        <PanelButton $after={5} aria-label="Processore">
          <Svg w={24} h={20}>
            <path d="M5.500 1v18M8.500 1v18M11.500 1v18M0 5.500h14M0 8.500h14M0 11.500h14M0 14.500h14" stroke="#e5e0a0" strokeWidth="1.500" />
            <rect x="2.500" y="4" width="12" height="12" fill="#7f8a6c" stroke="#20241a" />
            <rect x="7.500" y="8" width="4" height="4" fill="#e5e5e0" />
            <rect x="15.500" y=".5" width="7" height="19" fill="#fff" stroke="#333" />
            <rect x="16" y="10" width="6" height="9" fill="#9c8fd6" />
          </Svg>
        </PanelButton>
        <PanelButton $after={2}><Graph color="#0a7cc4" bars={[[6, 9], [7, 10], [9, 8], [10, 3], [14, 12], [15, 13], [17, 2], [19, 2], [22, 3], [25, 1]]} /></PanelButton>
        <PanelButton $after={2}><Graph color="#f5dc1d" bars={[[2, 3], [17, 20], [21, 13], [23, 9], [24, 9], [26, 2]]} /></PanelButton>
        <PanelButton $after={2}><Graph color="#c81818" bars={[]} floor /></PanelButton>
        <PanelButton $after={14}><Graph color="#f06a14" bars={[[5, 3], [10, 20], [13, 6], [14, 3]]} /></PanelButton>
        <PanelButton $after={17} aria-label="Temperatura">
          <Svg w={14} h={20}>
            <path d="M4 12V3a2 2 0 0 1 4 0v9a4 4 0 1 1-4 0z" fill="none" stroke="#dfdbd2" strokeWidth="1.800" />
            <path d="M9 3.500h4M9 6.500h2.500M9 9.500h4" stroke="#dfdbd2" strokeWidth="1.500" />
            <circle cx="6" cy="15" r="1.500" fill="#dfdbd2" />
          </Svg>
        </PanelButton>
        <PanelButton $after={15} aria-label="Rete">
          <Svg w={20} h={14}>
            <path d="M1 5a13 13 0 0 1 18 0" stroke="#8d8a82" strokeWidth="1.800" fill="none" />
            <path d="M4 8a9 9 0 0 1 12 0" stroke="#aba79f" strokeWidth="1.800" fill="none" />
            <path d="M6.500 10.500a5 5 0 0 1 7 0L10 14z" fill="#dfdbd2" />
          </Svg>
        </PanelButton>
        <PanelButton $after={16} aria-label="Tastiera italiana">
          <Svg w={22} h={18}>
            <rect width="22" height="18" fill="#dfdbd2" />
            <text x="11" y="14" textAnchor="middle" fontFamily={ui} fontWeight="500" fontSize="13" fill="#4c4a44">It</text>
          </Svg>
        </PanelButton>
        <PanelButton $after={17} aria-label="Messaggi">
          <Svg w={18} h={12}>
            <rect width="18" height="12" fill="#dfdbd2" />
            <path d="M1 1l8 6 8-6M1 11l5.500-5M17 11l-5.500-5" stroke="#4c4a44" fill="none" strokeWidth="1.200" />
          </Svg>
        </PanelButton>
        <PanelButton $after={11} aria-label="Volume">
          <Svg w={20} h={16}>
            <path d="M0 5h3l5-4v14l-5-4H0z" fill="#dfdbd2" />
            <path d="M10 5q2 3 0 6M13 3q3.500 5 0 10M16 1q5 7 0 14" stroke="#dfdbd2" fill="none" strokeWidth="1.500" />
          </Svg>
        </PanelButton>
        <PanelButton $after={14}>dom&nbsp; 9 nov 18.40</PanelButton>
        <PanelButton aria-label="Sessione">
          <Svg w={18} h={18}>
            <circle cx="9" cy="9.500" r="5.500" fill="none" stroke="#dfdbd2" strokeWidth="2" />
            <path d="M0 9.500h3M15 9.500h3M2.600 3l2.200 2.200M15.400 3l-2.200 2.200M2.600 16l2.200-2.200M15.400 16l-2.200-2.200M9 15v3" stroke="#dfdbd2" strokeWidth="2.200" />
            <path d="M9 0v9" stroke="#4c4a44" strokeWidth="4.500" />
            <path d="M9 0v9" stroke="#dfdbd2" strokeWidth="2" />
          </Svg>
        </PanelButton>
      </Panel>

      <TitleBar>
        <Dot />
        <WindowTitle>usodelmiostile.odt - LibreOffice Writer</WindowTitle>
        <WindowButtons>
          <RoundButton label="Riduci"><path d="M4.500 8.500h7" stroke="#33322f" /></RoundButton>
          <RoundButton label="Massimizza"><rect x="4.500" y="5.500" width="7" height="5" fill="none" stroke="#33322f" /></RoundButton>
          <RoundButton label="Chiudi">{cross}</RoundButton>
        </WindowButtons>
      </TitleBar>

      <MenuBar>
        {menus.map(([a, u, b], i) => (
          <MenuButton key={i}>{a}{u && <u>{u}</u>}{b}</MenuButton>
        ))}
      </MenuBar>

      <Toolbar>
        <Grip />
        <Tools spec={standardTools} />
      </Toolbar>

      <Toolbar $indent={11}>
        <Grip />
        <Tool $on aria-label="Stili">{icons.styles}</Tool>
        <Separator />
        <ComboBox label="Stile" value="miotitolo" width={130} />
        <Separator />
        <ComboBox label="Carattere" value="Liberation Serif" width={156} />
        <Separator />
        <ComboBox label="Dimensione" value="12" width={66} />
        <Separator />
        <Tool $on aria-label="Grassetto"><Letter /></Tool>
        <Tool aria-label="Corsivo"><Letter italic /></Tool>
        <Tool $on aria-label="Sottolineato"><Letter underline /></Tool>
        <Separator />
        <Tools spec={alignTools} />
      </Toolbar>

      <Main>
        <Editor>
          <RulerRow>
            <RulerCorner><Svg w={7} h={6}><path d="M1 0v5h6" stroke="#777674" strokeWidth="2" fill="none" /></Svg></RulerCorner>
            <RulerTrack><HorizontalRuler /></RulerTrack>
          </RulerRow>
          <Work>
            <SideRuler><VerticalRuler /></SideRuler>
            <Canvas>
              <Sheet>
                <CornerMark />
                <DocTitle>Titolo principale sull'uso stili personali</DocTitle>
                <Para><br /></Para>
                <Para><br /></Para>
                <Para>Uso dello stile titolo 1<Caret /></Para>
                <Para><Checked text={body1} /></Para>
                <Para><br /></Para>
                <Para>Uso dello stile titolo 2</Para>
                <Para><Checked text={body2} /></Para>
              </Sheet>
            </Canvas>
          </Work>
        </Editor>
        <Scroll $after={1}>
          <ScrollButton aria-label="Su"><Tri up /></ScrollButton>
          <ScrollTrough>
            <ScrollThumb $grow={154} />
            <ScrollGap $grow={330} />
          </ScrollTrough>
          <ScrollButton $down aria-label="Giù"><Tri /></ScrollButton>
          <ScrollButton $round aria-label="Pagina precedente"><Expand up /></ScrollButton>
          <ScrollButton $round aria-label="Navigazione">
            <Svg w={6} h={6}><path d="M0 6V3l3-3h3v6z" fill="#3f6f96" /></Svg>
          </ScrollButton>
          <ScrollButton $round aria-label="Pagina successiva"><Expand /></ScrollButton>
        </Scroll>
      </Main>

      <Toolbar>
        <Grip />
        <Tools spec={drawTools} />
      </Toolbar>

      <StatusBar>
        <StatusCell $width={127} $indent={10}>Pagina 1 / 1</StatusCell>
        <StatusCell $width={269}>215 parole, 1476 caratteri</StatusCell>
        <StatusCell $width={150}>Stile predefinito</StatusCell>
        <StatusCell $width={147} $center>Italiano (Italia)</StatusCell>
        <StatusCell $width={68} />
        <StatusCell $width={29} $center>
          <Svg w={12} h={10}><path d="M0 2h8v6H0z" fill={grey} /><path d="M9 .5h3M9 9.500h3M10.500 0v10" stroke={grey} /></Svg>
        </StatusCell>
        <StatusCell $width={29} $center>
          <Svg w={14} h={14}>
            <path d="M.5.500h9l4 4v9H.5z" fill="#fff" stroke="#8f8fe0" />
            <path d="M9 1v4h4" fill="#ddd" stroke="#8f8fe0" />
            <path d="M2 5.500h6M2 8.500h10M2 11.500h10" stroke="#8f8fe0" />
            <path d="M4.500 1v8M4.500 11v3M3 12.500h3" stroke="#e00" strokeWidth="2" />
          </Svg>
        </StatusCell>
        <StatusCell $width={29} />
        <StatusFill />
        <StatusCell $width={76} $indent={12} $gap={6}>
          <Svg w={9} h={10}><path d="M.5.500h5l3 3v6h-8zM5.500.500v3h3" fill="none" stroke={grey} /></Svg>
          <Svg w={18} h={10}><path d="M.5.500h4l3 3v6h-7zM4.500.500v3h3M10.500.500h4l3 3v6h-7zM14.500.500v3h3" fill="none" stroke="#4d4c4a" /></Svg>
          <Svg w={17} h={10}><path d="M3.500.500h5v9h-8v-6zM3.500.500v3h-3M8.500.500h5l3 3v6h-8M13.500.500v3h3" fill="none" stroke={grey} /></Svg>
        </StatusCell>
        <StatusCell $width={143} $indent={10} $gap={6}>
          <Svg w={9} h={9}><path d="M0 4.500h9" stroke={grey} strokeWidth="2" /></Svg>
          <ZoomRange type="range" min="0" max="100" defaultValue="52" aria-label="Zoom" />
          <Svg w={9} h={9}><path d="M0 4.500h9M4.500 0v9" stroke={grey} strokeWidth="2" /></Svg>
        </StatusCell>
        <StatusCell $width={49}>140%</StatusCell>
      </StatusBar>

      <TaskBar>
        <Svg w={18} h={14}>
          <rect width="18" height="14" rx="1" fill="#d9b3d6" />
          <path d="M1 3.500h16v10H1z" fill="#b56ab0" />
          <path d="M1 1.500h16" stroke="#eee" />
          <path d="M3 5.500h2v2H3zM3 9.500h2v2H3z" fill="#eee" />
        </Svg>
        <TaskGrip />
        <Task><Firefox s={16} /><span>|| Generatore di tes…</span></Task>
        <Task><WriterDoc /><span>Senza nome 1 - Libr…</span></Task>
        <Task $active><WriterDoc /><span>usodelmiostile.odt …</span></Task>
        <Spacer />
        <Svg w={20} h={22}>
          <path d="M1 2h17l-2 19H4z" fill="#9a9993" stroke="#c9c8c4" />
          <ellipse cx="9.500" cy="2.500" rx="8.500" ry="2" fill="#55534e" stroke="#c9c8c4" />
          <path d="M4 8l4 2 3-3 4 3-2 4-4-1-3 2M6 16l4 3 4-3" stroke="#e5e4e0" strokeWidth="2" fill="none" />
        </Svg>
        <Gap $w={3} />
        <Workspace $current aria-label="Area di lavoro 1"><WriterDoc /></Workspace>
        <Workspace aria-label="Area di lavoro 2" />
      </TaskBar>

      <StylesWindow>
        <StylesTitle>
          <Dot />
          <h2>Stili e formattazione</h2>
          <RoundButton label="Chiudi" close>{cross}</RoundButton>
        </StylesTitle>
        <StylesTools>
          {styleIcons.map(([label, icon], i) => (
            <Tool key={label} $on={i === 0} aria-label={label}>{icon}</Tool>
          ))}
          <Spacer />
          <Tool $on aria-label="Modo riempimento">
            <Svg w={17} h={17}>
              <path d="M1.500 8.500L9 4.500l4.500 6.500-7 4.500z" fill="#f4f4f3" stroke="#666" />
              <path d="M3.500 7.500C2 .500 8 0 8 4.500V9" stroke="#777" fill="none" />
              <path d="M11.500 6.500c3.500-1 4.500 1 4 7.500" stroke="#4a6fae" strokeWidth="2" fill="none" />
              <circle cx="8" cy="9" r="1.300" fill="#555" />
            </Svg>
          </Tool>
          <Tool aria-label="Nuovo stile">
            <Svg>
              <path d="M7.500 3H4a2.500 2.500 0 0 0 0 5h.5v5h.8V4h1v9H7V4h.5z" fill="#444" />
              <path d="M9.500 3.500H15M9.500 6.500H15M9.500 9.500H15M9.500 12.500H15" stroke="#444" />
            </Svg>
          </Tool>
          <DropArrow aria-label="Altro" />
        </StylesTools>
        <ListFrame>
          <StyleList role="listbox" aria-label="Stili">
            {styleNames.map((n) => (
              <StyleItem key={n} role="option" aria-selected={n === "miotitolo1"} $selected={n === "miotitolo1"}>
                <span>{n}</span>
              </StyleItem>
            ))}
          </StyleList>
          <Scroll>
            <ScrollButton aria-label="Su"><Tri up /></ScrollButton>
            <ScrollTrough>
              <ScrollGap $grow={177} />
              <ScrollThumb $grow={59} />
              <ScrollGap $grow={127} />
            </ScrollTrough>
            <ScrollButton $down aria-label="Giù"><Tri /></ScrollButton>
          </Scroll>
        </ListFrame>
        <FilterField>
          <FilterSelect aria-label="Filtro stili" defaultValue="all">
            <option value="all">Tutti gli stili</option>
          </FilterSelect>
          <FilterArrows><Svg w={7} h={15}><path d="M0 5l3.500-4L7 5zM0 10h7l-3.500 4z" fill="#6f6e6c" /></Svg></FilterArrows>
        </FilterField>
      </StylesWindow>
    </Desktop>
  );
}
